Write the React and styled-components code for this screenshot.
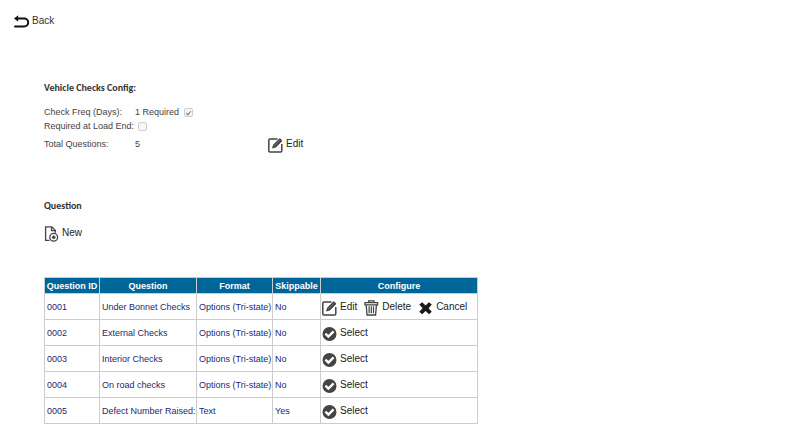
import React from 'react';
import styled, { createGlobalStyle } from 'styled-components';

const GlobalStyle = createGlobalStyle`
  body {
    margin: 0;
    background: #fefefe;
    color: #444;
    font-family: "Liberation Sans", Arial, sans-serif;
    font-size: 9px;
    line-height: 12px;
  }
`;

const Page = styled.div`
  padding: 13px 14px;
`;

const Content = styled.main`
  padding: 0 30px;
`;

const BackLink = styled.a`
  display: inline-flex;
  align-items: center;
  gap: 3px;
  height: 16px;
  color: #333;
  font-size: 10px;
  text-decoration: none;
`;

const Heading = styled.h2`
  margin: 0;
  color: #333;
  font-family: Carlito, Calibri, Lato, sans-serif;
  font-size: 10px;
  font-weight: bold;
  line-height: 14px;
`;

const Section = styled.section`
  padding-top: ${props => props.$space}px;
`;

const ConfigGrid = styled.div`
  display: grid;
  grid-template-columns: 91px 133px auto;
  grid-template-rows: 14px 14px 22px;
  align-items: center;
  justify-content: start;
  padding-top: 10px;
`;

const Label = styled.label`
  white-space: nowrap;
`;

const Value = styled.div`
  display: flex;
  align-items: center;
  gap: 5px;
`;

const CheckCell = styled(Value)`
  grid-column: 2 / 4;
  padding-left: 3px;
`;

const Checkbox = styled.input`
  appearance: none;
  box-sizing: border-box;
  display: grid;
  place-items: center;
  width: 9px;
  height: 9px;
  margin: 0;
  border: 1px solid #d0d0d0;
  border-radius: 2px;
  background: #f6f6f6;

  &:checked::after {
    content: "";
    width: 2px;
    height: 4px;
    border: solid #777;
    border-width: 0 1px 1px 0;
    transform: rotate(40deg);
  }
`;

const ActionButton = styled.button`
  display: inline-flex;
  align-items: center;
  gap: 3px;
  padding: 0;
  border: 0;
  background: none;
  color: #222;
  font-family: inherit;
  font-size: 10px;
  line-height: 14px;
  cursor: pointer;
`;

const Icon = styled.svg`
  flex: none;
  width: 15px;
  height: 16px;
  position: relative;
  top: 1px;
`;

const Table = styled.table`
  margin-top: 33px;
  border-collapse: collapse;
  color: #1f1f6e;
`;

const Th = styled.th`
  box-sizing: border-box;
  width: ${props => props.$width}px;
  height: 16px;
  padding: 1px;
  border: 1px solid #ccc;
  background: #069;
  color: #fff;
  font-weight: bold;
  white-space: nowrap;
`;

const Td = styled.td`
  box-sizing: border-box;
  height: 26px;
  padding: 0 0 0 2px;
  border: 1px solid #ccc;
  background: #fff;
  white-space: nowrap;
`;

const ActionsTd = styled(Td)`
  padding-left: 1px;
`;

const Actions = styled.div`
  display: flex;
  align-items: center;
  gap: 7px;
`;

const BackIcon = () => (
  <Icon viewBox="0 0 15 16" fill="none" stroke="#111" strokeWidth="2" aria-hidden="true">
    <path d="M3 4.5h7.2a4 4 0 0 1 0 8H1" strokeLinecap="round" />
    <path d="M0 4.5 4.2 1.3v6.4z" fill="#111" stroke="none" />
  </Icon>
);

const EditIcon = () => (
  <Icon viewBox="0 0 15 16" fill="none" stroke="#444" strokeWidth="1.5" aria-hidden="true">
    <path d="M9.5 1.9H2A1.2 1.2 0 0 0 .8 3.1v10.6a1.2 1.2 0 0 0 1.2 1.2h10.6a1.2 1.2 0 0 0 1.2-1.2V7" />
    <path d="m4 11.6 1.1-3.9 6-6a.9.9 0 0 1 1.3 0l1.4 1.4a.9.9 0 0 1 0 1.3l-6 6z" fill="#444" stroke="none" />
    <path d="m6 9.2 6-6" stroke="#aaa" strokeWidth=".5" />
  </Icon>
);

const NewIcon = () => (
  <Icon viewBox="0 0 15 16" fill="none" stroke="#444" strokeWidth="1.3" aria-hidden="true">
    <path d="M5.5 14.4H1.6V.8h6.2l3.6 3.6v2.4M7.6 1v3.7h3.6" />
    <circle cx="9.7" cy="11.3" r="3.9" />
    <path d="M9.7 9.5v3.6M7.9 11.3h3.6" strokeWidth="1.8" />
  </Icon>
);

const DeleteIcon = () => (
  <Icon viewBox="0 0 15 16" fill="none" stroke="#444" strokeWidth="1.3" aria-hidden="true">
    <path d="M1 4.8V2.7h12.6v2.1zM4.6 2.5V.9h5.4v1.6M2.2 5l.8 10h8.6l.8-10" />
    <path d="M5.1 6.3v7M7.3 6.3v7M9.5 6.3v7" strokeWidth="1.2" />
  </Icon>
);

const CancelIcon = () => (
  <Icon viewBox="0 0 15 16" fill="#1a1a1a" aria-hidden="true">
    <path d="M4.2 2.2 7.6 5.5l3.3-3.3 2.9 2.3-3.2 3.7 3.2 3.5-2.8 2.5-3.4-3.2-3.4 3.2-2.9-2.5 3.3-3.5-3.3-3.6z" />
  </Icon>
);

const SelectIcon = () => (
  <Icon viewBox="0 0 15 16" aria-hidden="true">
    <circle cx="7.5" cy="8" r="7" fill="#444" />
    <path d="m3.4 7.6 3 3 5.2-5.2" fill="none" stroke="#fff" strokeWidth="2.4" />
  </Icon>
);

const columns = [
  { title: 'Question ID', width: 55 },
  { title: 'Question', width: 97 },
  { title: 'Format', width: 76 },
  { title: 'Skippable', width: 48 },
  { title: 'Configure', width: 157 },
];

const questions = [
  { id: '0001', text: 'Under Bonnet Checks', format: 'Options (Tri-state)', skippable: 'No' },
  { id: '0002', text: 'External Checks', format: 'Options (Tri-state)', skippable: 'No' },
  { id: '0003', text: 'Interior Checks', format: 'Options (Tri-state)', skippable: 'No' },
  { id: '0004', text: 'On road checks', format: 'Options (Tri-state)', skippable: 'No' },
  { id: '0005', text: 'Defect Number Raised:', format: 'Text', skippable: 'Yes' },
];

const QuestionRow = ({ question, selected }) => (
  <tr>
    <Td>{question.id}</Td>
    <Td>{question.text}</Td>
    <Td>{question.format}</Td>
    <Td>{question.skippable}</Td>
    <ActionsTd>
      {selected ? (
        <Actions>
          <ActionButton type="button"><EditIcon />Edit</ActionButton>
          <ActionButton type="button"><DeleteIcon />Delete</ActionButton>
          <ActionButton type="button"><CancelIcon />Cancel</ActionButton>
        </Actions>
      ) : (
        <Actions>
          <ActionButton type="button"><SelectIcon />Select</ActionButton>
        </Actions>
      )}
    </ActionsTd>
  </tr>
);

const App = () => (
  <Page>
    <GlobalStyle />
    <BackLink href="#"><BackIcon />Back</BackLink>
    <Content>
      <Section $space={49}>
        <Heading>Vehicle Checks Config:</Heading>
        <ConfigGrid>
          <span>Check Freq (Days):</span>
          <Value>
            <Label htmlFor="required">1 Required</Label>
            <Checkbox id="required" type="checkbox" defaultChecked disabled />
          </Value>
          <span />
          <Label htmlFor="load-end">Required at Load End:</Label>
          <CheckCell>
            <Checkbox id="load-end" type="checkbox" disabled />
          </CheckCell>
          <span>Total Questions:</span>
          <span>5</span>
          <ActionButton type="button"><EditIcon />Edit</ActionButton>
        </ConfigGrid>
      </Section>
      <Section $space={44}>
        <Heading>Question</Heading>
        <Section $space={12}>
          <ActionButton type="button"><NewIcon />New</ActionButton>
        </Section>
        <Table>
          <thead>
            <tr>
              {columns.map(col => (
                <Th key={col.title} scope="col" $width={col.width}>{col.title}</Th>
              ))}
            </tr>
          </thead>
          <tbody>
            {questions.map((question, i) => (
              <QuestionRow key={question.id} question={question} selected={i === 0} />
            ))}
          </tbody>
        </Table>
      </Section>
    </Content>
  </Page>
);

export default App;
